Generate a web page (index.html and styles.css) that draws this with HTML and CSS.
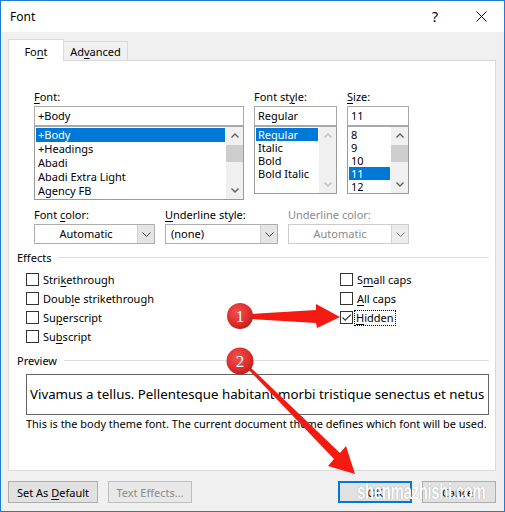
FILE: index.html
```html
<!DOCTYPE html>
<html lang="en">
<head>
    <meta charset="UTF-8">
    <meta name="viewport" content="width=device-width, initial-scale=1.0">
    <title>Font</title>
    <link rel="stylesheet" href="styles.css">
</head>
<body>
    <div class="window">
        <div class="titlebar">
            <span class="title">Font</span>
            <span class="caption-btn">?</span>
            <span class="caption-btn">
                <svg width="11" height="11" viewBox="0 0 11 11"><path d="M0.5 0.5L10.5 10.5M10.5 0.5L0.5 10.5" stroke="#000" stroke-width="1"/></svg>
            </span>
        </div>

        <div class="dialog">
            <div class="tabs">
                <div class="tab active">Fo<u>n</u>t</div>
                <div class="tab">Ad<u>v</u>anced</div>
            </div>

            <div class="panel">
                <div class="pickers">
                    <div class="picker picker-font">
                        <div class="label"><u>F</u>ont:</div>
                        <div class="field">+Body</div>
                        <div class="list list-font">
                            <div class="items">
                                <div class="item selected">+Body</div>
                                <div class="item">+Headings</div>
                                <div class="item">Abadi</div>
                                <div class="item">Abadi Extra Light</div>
                                <div class="item">Agency FB</div>
                            </div>
                            <div class="scrollbar">
                                <div class="sb-btn"><svg width="8" height="5" viewBox="0 0 8 5"><path d="M0.5 4.5L4 1L7.5 4.5" fill="none" stroke="#606060" stroke-width="1.4"/></svg></div>
                                <div class="thumb"></div>
                                <div class="sb-track"></div>
                                <div class="sb-btn"><svg width="8" height="5" viewBox="0 0 8 5"><path d="M0.5 0.5L4 4L7.5 0.5" fill="none" stroke="#606060" stroke-width="1.4"/></svg></div>
                            </div>
                        </div>
                    </div>

                    <div class="picker picker-style">
                        <div class="label">Font st<u>y</u>le:</div>
                        <div class="field">Regular</div>
                        <div class="list list-short">
                            <div class="items">
                                <div class="item selected">Regular</div>
                                <div class="item">Italic</div>
                                <div class="item">Bold</div>
                                <div class="item">Bold Italic</div>
                            </div>
                            <div class="scrollbar disabled">
                                <div class="sb-btn"><svg width="8" height="5" viewBox="0 0 8 5"><path d="M0.5 4.5L4 1L7.5 4.5" fill="none" stroke="#bfbfbf" stroke-width="1.4"/></svg></div>
                                <div class="sb-track"></div>
                                <div class="sb-btn"><svg width="8" height="5" viewBox="0 0 8 5"><path d="M0.5 0.5L4 4L7.5 0.5" fill="none" stroke="#bfbfbf" stroke-width="1.4"/></svg></div>
                            </div>
                        </div>
                    </div>

                    <div class="picker picker-size">
                        <div class="label"><u>S</u>ize:</div>
                        <div class="field">11</div>
                        <div class="list list-short">
                            <div class="items">
                                <div class="item">8</div>
                                <div class="item">9</div>
                                <div class="item">10</div>
                                <div class="item selected">11</div>
                                <div class="item">12</div>
                            </div>
                            <div class="scrollbar">
                                <div class="sb-btn"><svg width="8" height="5" viewBox="0 0 8 5"><path d="M0.5 4.5L4 1L7.5 4.5" fill="none" stroke="#606060" stroke-width="1.4"/></svg></div>
                                <div class="thumb"></div>
                                <div class="sb-track"></div>
                                <div class="sb-btn"><svg width="8" height="5" viewBox="0 0 8 5"><path d="M0.5 0.5L4 4L7.5 0.5" fill="none" stroke="#606060" stroke-width="1.4"/></svg></div>
                            </div>
                        </div>
                    </div>
                </div>

                <div class="combos">
                    <div class="combo-col combo-wide">
                        <div class="label">Font <u>c</u>olor:</div>
                        <div class="combo">
                            <span class="combo-value centered">Automatic</span>
                            <span class="combo-btn"><svg width="9" height="5" viewBox="0 0 9 5"><path d="M0.5 0.5L4.5 4.5L8.5 0.5" fill="none" stroke="#444" stroke-width="1"/></svg></span>
                        </div>
                    </div>
                    <div class="combo-col combo-mid">
                        <div class="label"><u>U</u>nderline style:</div>
                        <div class="combo">
                            <span class="combo-value">(none)</span>
                            <span class="combo-btn"><svg width="9" height="5" viewBox="0 0 9 5"><path d="M0.5 0.5L4.5 4.5L8.5 0.5" fill="none" stroke="#444" stroke-width="1"/></svg></span>
                        </div>
                    </div>
                    <div class="combo-col combo-wide disabled">
                        <div class="label">Underline color:</div>
                        <div class="combo">
                            <span class="combo-value centered">Automatic</span>
                            <span class="combo-btn"><svg width="9" height="5" viewBox="0 0 9 5"><path d="M0.5 0.5L4.5 4.5L8.5 0.5" fill="none" stroke="#777" stroke-width="1"/></svg></span>
                        </div>
                    </div>
                </div>

                <div class="group">
                    <div class="legend">Effects</div>
                    <div class="effects">
                        <div class="check"><span class="box"></span><span>Stri<u>k</u>ethrough</span></div>
                        <div class="check"><span class="box"></span><span>Doub<u>l</u>e strikethrough</span></div>
                        <div class="check"><span class="box"></span><span>Su<u>p</u>erscript</span></div>
                        <div class="check"><span class="box"></span><span>Su<u>b</u>script</span></div>
                        <div class="check"><span class="box"></span><span>S<u>m</u>all caps</span></div>
                        <div class="check"><span class="box"></span><span><u>A</u>ll caps</span></div>
                        <div class="check">
                            <span class="box"><svg width="11" height="11" viewBox="0 0 11 11"><path d="M1.5 5.5L4.2 8.2L9.8 2.6" fill="none" stroke="#333" stroke-width="1.2"/></svg></span>
                            <span class="focused"><u>H</u>idden</span>
                        </div>
                    </div>
                </div>

                <div class="group">
                    <div class="legend">Preview</div>
                    <div class="preview">Vivamus a tellus. Pellentesque habitant morbi tristique senectus et netus et malesuada</div>
                    <p class="note">This is the body theme font. The current document theme defines which font will be used.</p>
                </div>
            </div>

            <div class="actions">
                <button class="btn btn-default">Set As <u>D</u>efault</button>
                <button class="btn btn-effects" disabled>Text Effects...</button>
                <span class="spacer"></span>
                <button class="btn btn-ok">OK</button>
                <button class="btn btn-cancel">Cancel</button>
            </div>
        </div>

        <!-- numbered red callouts drawn over the dialog -->
        <svg class="callouts" width="505" height="512" viewBox="0 0 505 512">
            <defs>
                <radialGradient id="badge" cx="0.4" cy="0.35" r="0.7">
                    <stop offset="0" stop-color="#f0514f"/>
                    <stop offset="0.7" stop-color="#dc2a2a"/>
                    <stop offset="1" stop-color="#b81a1a"/>
                </radialGradient>
            </defs>
            <polygon points="250,314 316,310 316,304 340,317 317,328 316,323 250,319" fill="#f41a12"/>
            <polygon points="249,366 340,453 346,446 355,474 328,466 334,459 247,368" fill="#f41a12"/>
            <circle cx="240" cy="316" r="13" fill="url(#badge)"/>
            <circle cx="240" cy="361" r="13.5" fill="url(#badge)"/>
            <text x="240" y="322" class="badge-num">1</text>
            <text x="240" y="367" class="badge-num">2</text>
        </svg>
        <span class="watermark">shenmazhishi.com</span>
    </div>
</body>
</html>
```

FILE: styles.css
```css
body {
    margin: 0;
    font-family: "Segoe UI", "Noto Sans", sans-serif;
    font-size: 11px;
    color: #000;
    background: #fff;
}

u {
    text-decoration-thickness: 1px;
    text-underline-offset: 2px;
}

.window {
    position: relative;
    width: 505px;
    height: 512px;
    box-sizing: border-box;
    border: 1px solid #1e7ad2;
    background-color: #f0f0f0;
    display: flex;
    flex-direction: column;
    overflow: hidden;
}

/* title bar */
.titlebar {
    height: 31px;
    background-color: #fff;
    display: flex;
    align-items: center;
    padding-left: 9px;
}

.title {
    flex: 1;
    font-size: 12px;
}

.caption-btn {
    width: 46px;
    height: 31px;
    display: flex;
    align-items: center;
    justify-content: center;
    font-size: 14px;
}

.dialog {
    flex: 1;
    padding: 7px 8px 0 7px;
    display: flex;
    flex-direction: column;
}

/* tabs */
.tabs {
    display: flex;
    align-items: flex-end;
    height: 22px;
    margin-bottom: -1px;
    position: relative;
    z-index: 1;
}

.tab {
    box-sizing: border-box;
    height: 20px;
    width: 65px;
    margin-left: -1px;
    border: 1px solid #d9d9d9;
    background-color: #f0f0f0;
    display: flex;
    align-items: center;
    justify-content: center;
}

.tab.active {
    height: 22px;
    width: 56px;
    margin-left: 0;
    border-bottom: none;
    background-color: #fff;
    padding-top: 1px;
}

.panel {
    height: 411px;
    box-sizing: border-box;
    background-color: #fff;
    border: 1px solid #d9d9d9;
    padding: 29px 6px 0 8px;
}

.label {
    line-height: 14px;
    margin-bottom: 2px;
    white-space: nowrap;
}

/* font / style / size pickers */
.pickers {
    display: flex;
    align-items: flex-start;
    gap: 10px;
    margin-left: 17px;
}

.picker-font { width: 210px; }
.picker-style { width: 83px; }
.picker-size { width: 62px; }

.field {
    height: 20px;
    box-sizing: border-box;
    border: 1px solid #a9a9a9;
    padding-left: 3px;
    line-height: 18px;
}

.list {
    display: flex;
    box-sizing: border-box;
    border: 1px solid #9a9a9a;
    border-top-color: #a9a9a9;
    height: 68px;
    overflow: hidden;
}

.list-font {
    height: 74px;
}

.items {
    flex: 1;
    padding: 1px;
    overflow: hidden;
}

.item {
    height: 14px;
    line-height: 14px;
    padding-left: 2px;
    white-space: nowrap;
}

.list-short .item {
    height: 13px;
    line-height: 13px;
}

.list-short .items {
    padding-top: 1px;
}

.item.selected {
    background-color: #0078d7;
    color: #fff;
}

.scrollbar {
    width: 17px;
    background-color: #f0f0f0;
    display: flex;
    flex-direction: column;
}

.sb-btn {
    height: 17px;
    display: flex;
    align-items: center;
    justify-content: center;
}

.sb-track {
    flex: 1;
}

.thumb {
    height: 17px;
    margin: 1px 0 0;
    background-color: #cdcdcd;
}

/* colour and underline drop-downs */
.combos {
    display: flex;
    gap: 10px;
    margin: 8px 0 0 17px;
}

.combo-wide { width: 121px; }
.combo-mid { width: 113px; }

.combo {
    display: flex;
    height: 20px;
    box-sizing: border-box;
    border: 1px solid #adadad;
    background-color: #fff;
}

.combo-value {
    flex: 1;
    line-height: 18px;
    padding-left: 5px;
}

.combo-value.centered {
    text-align: center;
    padding-left: 0;
}

.combo-btn {
    width: 16px;
    background-color: #e5e5e5;
    border-left: 1px solid #d0d0d0;
    display: flex;
    align-items: center;
    justify-content: center;
}

.disabled .label,
.disabled .combo-value {
    color: #8a8a8a;
}

.disabled .combo {
    border-color: #cccccc;
}

.disabled .combo-btn {
    background-color: #ececec;
}

/* group boxes */
.group {
    margin-top: 7px;
}

.group + .group {
    margin-top: 8px;
}

.legend {
    display: flex;
    align-items: center;
    line-height: 14px;
}

.legend::after {
    content: "";
    flex: 1;
    border-top: 1px solid #dcdcdc;
    margin-left: 7px;
    margin-top: -1px;
}

.effects {
    display: grid;
    grid-template-columns: 314px 1fr;
    grid-template-rows: repeat(4, 19px);
    grid-auto-flow: column;
    margin: 5px 0 0 9px;
}

.check {
    display: flex;
    align-items: center;
    gap: 4px;
    white-space: nowrap;
}

.box {
    width: 13px;
    height: 13px;
    box-sizing: border-box;
    border: 1px solid #333;
    background-color: #fff;
    display: flex;
    align-items: center;
    justify-content: center;
}

.focused {
    outline: 1px dotted #000;
    outline-offset: 0;
    padding: 0 1px;
    margin-left: -2px;
    line-height: 14px;
}

.preview {
    margin: 6px 0 0 9px;
    height: 41px;
    box-sizing: border-box;
    border: 1px solid #646464;
    padding-left: 3px;
    line-height: 38px;
    font-size: 13.3px;
    white-space: nowrap;
    overflow: hidden;
}

.note {
    margin: 2px 0 0 9px;
    line-height: 14px;
    font-size: 10.95px;
    white-space: nowrap;
}

/* bottom buttons */
.actions {
    display: flex;
    margin-top: 10px;
}

.btn {
    height: 22px;
    box-sizing: border-box;
    border: 1px solid #adadad;
    background-color: #e1e1e1;
    font-family: inherit;
    font-size: 11px;
    color: #000;
    padding: 0;
}

.btn-default { width: 90px; }

.btn-effects {
    width: 84px;
    margin-left: 10px;
    color: #8a8a8a;
    border-color: #bfbfbf;
    background-color: #e8e8e8;
}

.spacer { flex: 1; }

.btn-ok {
    width: 74px;
    border: 2px solid #0078d7;
}

.btn-cancel {
    width: 74px;
    margin-left: 10px;
}

/* overlays */
.callouts {
    position: absolute;
    left: -1px;
    top: -1px;
    pointer-events: none;
}

.badge-num {
    fill: #fff;
    font-family: "Liberation Serif", serif;
    font-size: 17px;
    text-anchor: middle;
}

.watermark {
    position: absolute;
    left: 356px;
    top: 478px;
    font-family: "Liberation Sans", sans-serif;
    font-weight: bold;
    font-size: 22px;
    letter-spacing: -0.5px;
    color: #fff;
    transform: scaleX(0.68);
    transform-origin: left top;
    text-shadow: 0 0 1px rgba(0, 0, 0, 0.4);
    pointer-events: none;
}
```
